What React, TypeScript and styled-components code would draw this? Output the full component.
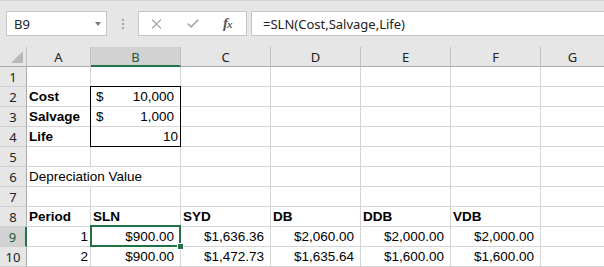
import React from 'react'
import styled, { createGlobalStyle, css } from 'styled-components'

const GlobalStyle = createGlobalStyle`
  html, body {
    margin: 0;
    padding: 0;
    background: #ffffff;
  }
`

const UI_FONT = `'Noto Sans', 'Open Sans', sans-serif`
const CELL_FONT = `'Liberation Sans', Arial, sans-serif`
const GREEN = '#217346'
const GRID = '#d4d4d4'
const HEADER_LINE = '#ababab'

const Window = styled.div`
  width: 604px;
  height: 267px;
  overflow: hidden;
  background: #ffffff;
`

const FormulaBar = styled.div`
  height: 47px;
  box-sizing: border-box;
  background: #e6e6e6;
  border-top: 1px solid #d6d6d6;
  padding: 10px 0 0 6px;
  display: flex;
  align-items: flex-start;
`

const NameBox = styled.div`
  width: 101px;
  height: 25px;
  box-sizing: border-box;
  background: #fff;
  border: 1px solid #c6c6c6;
  display: flex;
  align-items: center;
  justify-content: space-between;
  padding: 0 5px 0 7px;
  font-family: ${UI_FONT};
  font-size: 13px;
  color: #222;
`

const DropArrow = styled.span`
  width: 0;
  height: 0;
  border-left: 3.5px solid transparent;
  border-right: 3.5px solid transparent;
  border-top: 4px solid #7a7a7a;
`

const Grip = styled.div`
  width: 31px;
  height: 25px;
  display: flex;
  flex-direction: column;
  align-items: center;
  justify-content: center;
  gap: 2px;
  padding-top: 1px;
  box-sizing: border-box;

  span {
    width: 2px;
    height: 2px;
    background: #a3a3a3;
  }
`

const ActionBox = styled.div`
  width: 109px;
  height: 25px;
  box-sizing: border-box;
  background: #fff;
  border: 1px solid #c6c6c6;
  display: flex;
  align-items: center;
  padding-left: 12px;
  gap: 25px;
  margin-right: 4px;
`

const Fx = styled.span`
  font-family: 'Liberation Serif', serif;
  font-style: italic;
  font-weight: 700;
  font-size: 15px;
  color: #5a5a5a;
  letter-spacing: -1px;
  margin-left: -1px;

  small {
    font-size: 11px;
  }
`

const FormulaInput = styled.div`
  flex: 1;
  height: 25px;
  box-sizing: border-box;
  background: #fff;
  border: 1px solid #c6c6c6;
  border-right: none;
  display: flex;
  align-items: center;
  padding-left: 11px;
  font-family: ${UI_FONT};
  font-size: 13px;
  color: #222;
`

const Sheet = styled.div`
  display: grid;
  grid-template-columns: 27px 64px 90px 90px 90px 90px 90px 64px;
  grid-template-rows: 20px;
  grid-auto-rows: 20px;
`

const ColHeader = styled.div<{ $active?: boolean }>`
  box-sizing: border-box;
  background: ${p => (p.$active ? '#d2d2d2' : '#e6e6e6')};
  border-right: 1px solid #c0c0c0;
  border-bottom: ${p => (p.$active ? `2px solid ${GREEN}` : `1px solid ${HEADER_LINE}`)};
  display: flex;
  align-items: center;
  justify-content: center;
  padding-top: ${p => (p.$active ? '2px' : '1px')};
  font-family: ${UI_FONT};
  font-size: 13px;
  color: ${p => (p.$active ? '#1e5a3a' : '#222')};
`

const Corner = styled.div`
  box-sizing: border-box;
  background: #e6e6e6;
  border-right: 1px solid #c0c0c0;
  border-bottom: 1px solid ${HEADER_LINE};
  display: flex;
  align-items: flex-end;
  justify-content: flex-end;
  padding: 0 3px 3px 0;

  span {
    width: 0;
    height: 0;
    border-left: 12px solid transparent;
    border-bottom: 12px solid #b9b9b9;
  }
`

const RowHeader = styled.div<{ $active?: boolean }>`
  box-sizing: border-box;
  background: ${p => (p.$active ? '#d2d2d2' : '#e6e6e6')};
  border-right: ${p => (p.$active ? `2px solid ${GREEN}` : `1px solid ${HEADER_LINE}`)};
  border-bottom: 1px solid #cfcfcf;
  display: flex;
  align-items: center;
  justify-content: center;
  font-family: ${UI_FONT};
  font-size: 13px;
  color: ${p => (p.$active ? '#1e5a3a' : '#222')};
`

type Edges = { top?: boolean; bottom?: boolean }

const Cell = styled.div<{
  $align?: 'left' | 'right'
  $pad?: number
  $bold?: boolean
  $overflow?: boolean
  $box?: Edges
  $selected?: boolean
}>`
  position: relative;
  box-sizing: border-box;
  border-right: 1px solid ${p => (p.$overflow ? 'transparent' : GRID)};
  border-bottom: 1px solid ${GRID};
  display: flex;
  align-items: flex-end;
  justify-content: ${p => (p.$align === 'right' ? 'flex-end' : 'space-between')};
  padding: 0 ${p => (p.$align === 'right' ? p.$pad ?? 2 : 2)}px 2px
    ${p => (p.$align === 'right' ? 2 : p.$pad ?? 2)}px;
  font-family: ${CELL_FONT};
  font-size: 13.5px;
  font-weight: ${p => (p.$bold ? 700 : 400)};
  color: #000;
  white-space: nowrap;
  overflow: ${p => (p.$overflow || p.$box || p.$selected ? 'visible' : 'hidden')};
  z-index: ${p => (p.$overflow || p.$selected ? 1 : 0)};

  ${p =>
    p.$box &&
    css`
      &::after {
        content: '';
        position: absolute;
        inset: -1px -1px -1px -1px;
        border-left: 1px solid #000;
        border-right: 1px solid #000;
        border-top: ${p.$box.top ? '1px solid #000' : 'none'};
        border-bottom: ${p.$box.bottom ? '1px solid #000' : 'none'};
        pointer-events: none;
      }
    `}

  ${p =>
    p.$selected &&
    css`
      &::after {
        content: '';
        position: absolute;
        inset: -2px -1px -1px -1px;
        border: 2px solid ${GREEN};
        pointer-events: none;
      }
    `}
`

const FillHandle = styled.span`
  position: absolute;
  right: -4px;
  bottom: -4px;
  width: 5px;
  height: 5px;
  background: ${GREEN};
  border: 1px solid #fff;
  z-index: 2;
`

const CloseIcon = () => (
  <svg width="11" height="10" viewBox="0 0 11 10">
    <path d="M1 0.5 L10 9.5 M10 0.5 L1 9.5" stroke="#a8a8a8" strokeWidth="1.3" fill="none" />
  </svg>
)

const CheckIcon = () => (
  <svg width="12" height="9" viewBox="0 0 12 9">
    <path d="M0.8 4.6 L4.2 7.9 L11.3 0.8" stroke="#a8a8a8" strokeWidth="1.6" fill="none" />
  </svg>
)

type CellData = {
  text?: string
  dollar?: boolean
  align?: 'left' | 'right'
  pad?: number
  bold?: boolean
  overflow?: boolean
  box?: Edges
  selected?: boolean
}

const cols = ['A', 'B', 'C', 'D', 'E', 'F', 'G']

const bold = (text: string): CellData => ({ text, bold: true })
const money = (text: string): CellData => ({ text, align: 'right', pad: 6 })
const num = (text: string): CellData => ({ text, align: 'right', pad: 2 })

const rows: CellData[][] = [
  [],
  [bold('Cost'), { text: '10,000', dollar: true, pad: 5, box: { top: true } }],
  [bold('Salvage'), { text: '1,000', dollar: true, pad: 5, box: {} }],
  [bold('Life'), { ...num('10'), box: { bottom: true } }],
  [],
  [{ text: 'Depreciation Value', overflow: true }],
  [],
  [bold('Period'), bold('SLN'), bold('SYD'), bold('DB'), bold('DDB'), bold('VDB')],
  [
    num('1'),
    { ...money('$900.00'), selected: true },
    money('$1,636.36'),
    money('$2,060.00'),
    money('$2,000.00'),
    money('$2,000.00'),
  ],
  [
    num('2'),
    money('$900.00'),
    money('$1,472.73'),
    money('$1,635.64'),
    money('$1,600.00'),
    money('$1,600.00'),
  ],
]

export default function App() {
  return (
    <Window>
      <GlobalStyle />
      <FormulaBar>
        <NameBox>
          B9
          <DropArrow />
        </NameBox>
        <Grip>
          <span />
          <span />
          <span />
        </Grip>
        <ActionBox>
          <CloseIcon />
          <CheckIcon />
          <Fx>
            f<small>x</small>
          </Fx>
        </ActionBox>
        <FormulaInput>=SLN(Cost,Salvage,Life)</FormulaInput>
      </FormulaBar>

      <Sheet>
        <Corner>
          <span />
        </Corner>
        {cols.map(c => (
          <ColHeader key={c} $active={c === 'B'}>
            {c}
          </ColHeader>
        ))}
        {rows.map((row, r) => (
          <React.Fragment key={r}>
            <RowHeader $active={r === 8}>{r + 1}</RowHeader>
            {cols.map((c, i) => {
              const d = row[i] || {}
              return (
                <Cell
                  key={c}
                  $align={d.align}
                  $pad={d.pad}
                  $bold={d.bold}
                  $overflow={d.overflow}
                  $box={d.box}
                  $selected={d.selected}
                >
                  {d.dollar ? (
                    <>
                      <span>$</span>
                      <span style={{ paddingRight: 4 }}>{d.text}</span>
                    </>
                  ) : (
                    d.text
                  )}
                  {d.selected && <FillHandle />}
                </Cell>
              )
            })}
          </React.Fragment>
        ))}
      </Sheet>
    </Window>
  )
}
